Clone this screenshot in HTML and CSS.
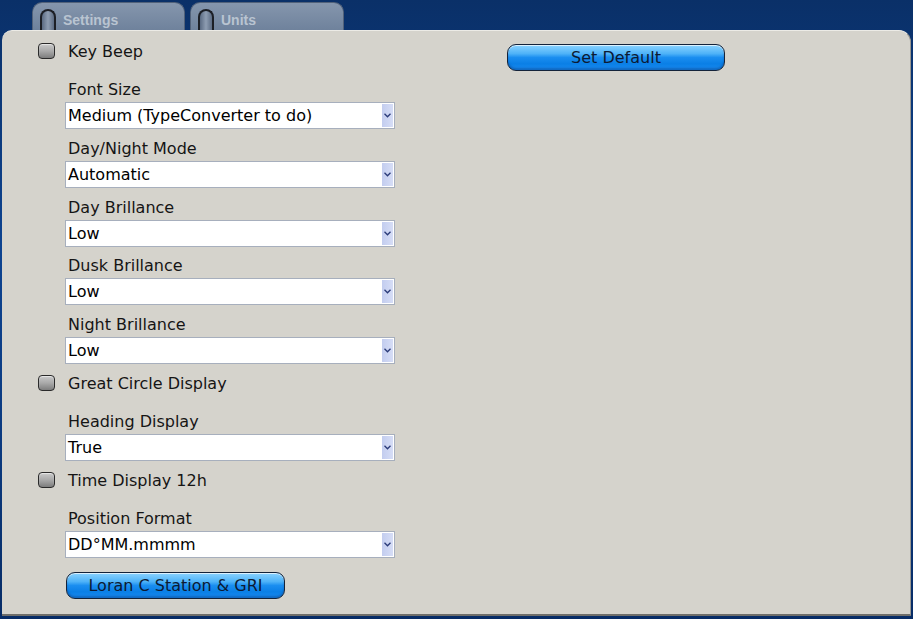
FILE: index.html
```html
<!DOCTYPE html>
<html lang="en">
<head>
<meta charset="UTF-8">
<title>Settings</title>
<link rel="stylesheet" href="styles.css">
</head>
<body>

<div class="tabs">
  <div class="tab"><span class="led"></span>Settings</div>
  <div class="tab"><span class="led"></span>Units</div>
</div>

<div class="panel">
  <div class="col-left">
    <div class="check"><span class="box"></span>Key Beep</div>

    <div class="field">
      <div class="label">Font Size</div>
      <div class="select"><span>Medium (TypeConverter to do)</span><i class="arrow"><svg width="7" height="5" viewBox="0 0 7 5"><path d="M0.5 0.8 L3.5 3.8 L6.5 0.8" fill="none" stroke="#2a3a78" stroke-width="1.3"/></svg></i></div>
    </div>
    <div class="field">
      <div class="label">Day/Night Mode</div>
      <div class="select"><span>Automatic</span><i class="arrow"><svg width="7" height="5" viewBox="0 0 7 5"><path d="M0.5 0.8 L3.5 3.8 L6.5 0.8" fill="none" stroke="#2a3a78" stroke-width="1.3"/></svg></i></div>
    </div>
    <div class="field">
      <div class="label">Day Brillance</div>
      <div class="select"><span>Low</span><i class="arrow"><svg width="7" height="5" viewBox="0 0 7 5"><path d="M0.5 0.8 L3.5 3.8 L6.5 0.8" fill="none" stroke="#2a3a78" stroke-width="1.3"/></svg></i></div>
    </div>
    <div class="field">
      <div class="label">Dusk Brillance</div>
      <div class="select"><span>Low</span><i class="arrow"><svg width="7" height="5" viewBox="0 0 7 5"><path d="M0.5 0.8 L3.5 3.8 L6.5 0.8" fill="none" stroke="#2a3a78" stroke-width="1.3"/></svg></i></div>
    </div>
    <div class="field">
      <div class="label">Night Brillance</div>
      <div class="select"><span>Low</span><i class="arrow"><svg width="7" height="5" viewBox="0 0 7 5"><path d="M0.5 0.8 L3.5 3.8 L6.5 0.8" fill="none" stroke="#2a3a78" stroke-width="1.3"/></svg></i></div>
    </div>

    <div class="check"><span class="box"></span>Great Circle Display</div>

    <div class="field">
      <div class="label">Heading Display</div>
      <div class="select"><span>True</span><i class="arrow"><svg width="7" height="5" viewBox="0 0 7 5"><path d="M0.5 0.8 L3.5 3.8 L6.5 0.8" fill="none" stroke="#2a3a78" stroke-width="1.3"/></svg></i></div>
    </div>

    <div class="check"><span class="box"></span>Time Display 12h</div>

    <div class="field">
      <div class="label">Position Format</div>
      <div class="select"><span>DD°MM.mmmm</span><i class="arrow"><svg width="7" height="5" viewBox="0 0 7 5"><path d="M0.5 0.8 L3.5 3.8 L6.5 0.8" fill="none" stroke="#2a3a78" stroke-width="1.3"/></svg></i></div>
    </div>

    <button class="gloss loran">Loran C Station &amp; GRI</button>
  </div>

  <div class="col-right">
    <button class="gloss wide">Set Default</button>
  </div>
</div>

</body>
</html>
```

FILE: styles.css
```css
body, html {
  margin: 0;
  padding: 0;
  height: 619px;
  overflow: hidden;
  font-family: "DejaVu Sans", Verdana, sans-serif;
  font-size: 16px;
  color: #151515;
  background: linear-gradient(180deg, #0a3068 0%, #0d4390 40%, #0b3a80 70%, #072c66 100%);
}
.tabs {
  display: flex;
  gap: 5px;
  height: 30px;
  box-sizing: border-box;
  padding: 2px 0 0 32px;
}
.tab {
  width: 153px;
  box-sizing: border-box;
  display: flex;
  align-items: flex-end;
  gap: 7px;
  padding: 0 0 2px 7px;
  border: 1px solid #52627a;
  border-bottom: none;
  border-radius: 10px 10px 0 0;
  background: linear-gradient(180deg, #8596ad 0%, #6f829c 100%);
  color: #b9c4d1;
  font-family: "Liberation Sans", Arial, sans-serif;
  font-weight: bold;
  font-size: 14px;
  line-height: 16px;
}
.tab + .tab { width: 154px; }
.led {
  width: 16px;
  height: 21px;
  margin-bottom: -2px;
  box-sizing: border-box;
  border: 2px solid #1c1f26;
  border-bottom: none;
  border-radius: 8px 8px 0 0;
  background: linear-gradient(90deg, #5a6a82 0%, #8e9db2 50%, #5a6a82 100%);
}
.panel {
  display: flex;
  margin-left: 2px;
  width: 909px;
  height: 586px;
  box-sizing: border-box;
  padding-top: 9px;
  background: #d5d3cc;
  border-radius: 10px 12px 0 0;
  border-top: 1px solid #ecebe6;
  border-right: 1px solid #9a9892;
  border-bottom: 2px solid #6f6e6a;
}
.col-left {
  width: 505px;
  box-sizing: border-box;
  padding-left: 36px;
}
.col-right {
  padding-top: 4px;
}
.check {
  display: flex;
  align-items: center;
  gap: 13px;
  height: 22px;
  margin-top: 8px;
}
.check:first-child { margin-top: 0; }
.box {
  width: 17px;
  height: 16px;
  box-sizing: border-box;
  border: 1px solid #2a2a2a;
  border-radius: 4px;
  background: linear-gradient(180deg, #c9c9c9 0%, #a9a9a9 50%, #7d7d7d 100%);
  box-shadow: inset 0 1px 1px rgba(255,255,255,.6);
}
.field {
  margin: 8.75px 0 0 27px;
}
.check + .field { margin-top: 17px; }
.check:first-child + .field { margin-top: 17px; }
.label {
  line-height: 22px;
  padding-left: 3px;
  margin-bottom: 1px;
}
.select {
  display: flex;
  align-items: center;
  width: 330px;
  height: 27px;
  box-sizing: border-box;
  border: 1px solid #a7afbd;
  background: #fff;
  color: #000;
}
.select span {
  flex: 1;
  padding-left: 2px;
}
.arrow {
  width: 11px;
  align-self: stretch;
  margin: 1px 1px 1px 0;
  display: flex;
  align-items: center;
  justify-content: center;
  background: linear-gradient(90deg, #c3cdef 0%, #d6ddf6 100%);
}
.gloss {
  height: 27px;
  box-sizing: border-box;
  border: 1px solid #14233a;
  border-radius: 9px;
  padding: 0;
  font-family: "DejaVu Sans", Verdana, sans-serif;
  font-size: 16px;
  color: #0c1a33;
  background: linear-gradient(180deg, #8bd3ff 0%, #4db2f8 35%, #1a8ef0 50%, #0a7fe6 75%, #1a8cf0 100%);
  box-shadow: inset 0 1px 0 rgba(255,255,255,.7), inset 0 -2px 2px rgba(0,40,110,.35);
}
.wide {
  width: 218px;
}
.loran {
  display: block;
  width: 219px;
  margin: 14px 0 0 28px;
}
```
